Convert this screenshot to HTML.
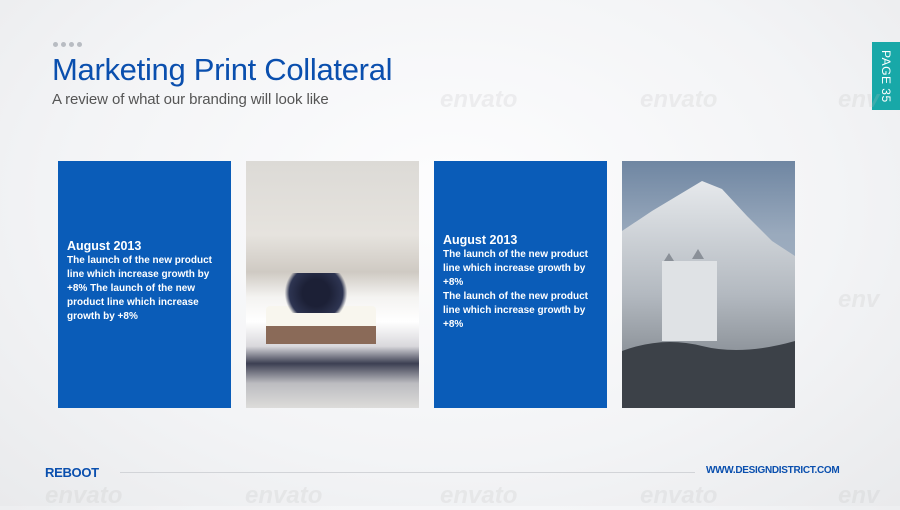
<!DOCTYPE html>
<html><head><meta charset="utf-8"><style>
*{margin:0;padding:0;box-sizing:border-box}
body{width:900px;height:506px;overflow:hidden;position:relative;font-family:"Liberation Sans",sans-serif;background:radial-gradient(ellipse at 50% 40%,#fdfdfe 0%,#f3f4f6 60%,#e9eaec 100%)}
.dots{position:absolute;left:53px;top:42px;display:flex;gap:3px}
.dots i{width:5px;height:5px;border-radius:50%;background:#b8bcc2;display:block}
h1{position:absolute;left:52px;top:52px;font-size:31px;font-weight:normal;color:#0a4fae;letter-spacing:-0.3px}
.sub{position:absolute;left:52px;top:91px;font-size:15px;color:#555;letter-spacing:-0.1px}
.tab{position:absolute;left:872px;top:42px;width:28px;height:68px;background:#18a8a8;color:#fff;font-size:12px;writing-mode:vertical-rl;display:flex;align-items:center;justify-content:center;letter-spacing:0.5px}
.card{position:absolute;top:161px;width:173px;height:247px;overflow:hidden}
.blue{background:#0a5cb8;color:#fff;padding:0 9px;font-weight:bold;font-size:10px;line-height:14px}
.blue b{font-size:12.5px;display:block;line-height:16px}
.wm{position:absolute;font-size:24px;font-style:italic;font-weight:bold;color:rgba(190,190,190,.22)}
.foot-l{position:absolute;left:45px;top:465px;font-size:13px;font-weight:bold;color:#0a4fae;letter-spacing:-0.3px}
.foot-r{position:absolute;left:706px;top:465px;font-size:10px;font-weight:bold;color:#0a4fae;letter-spacing:-0.3px}
.line{position:absolute;left:120px;top:472px;width:575px;height:1px;background:#d2d4d8}
</style></head><body>
<div class="dots"><i></i><i></i><i></i><i></i></div>
<h1>Marketing Print Collateral</h1>
<div class="sub">A review of what our branding will look like</div>
<div class="tab">PAGE 35</div>
<div class="wm" style="left:440px;top:86px">envato</div>
<div class="wm" style="left:640px;top:86px">envato</div>
<div class="wm" style="left:838px;top:86px">env</div>
<div class="wm" style="left:838px;top:286px">env</div>
<div class="wm" style="left:45px;top:482px">envato</div>
<div class="wm" style="left:245px;top:482px">envato</div>
<div class="wm" style="left:440px;top:482px">envato</div>
<div class="wm" style="left:640px;top:482px">envato</div>
<div class="wm" style="left:838px;top:482px">env</div>
<div class="card blue" style="left:58px;padding-top:77px"><b>August 2013</b>The launch of the new product line which increase growth by +8% The launch of the new product line which increase growth by +8%</div>
<div class="card" style="left:246px;background:linear-gradient(180deg,#dcdad6 0%,#e6e3de 30%,#cfcac3 45%,#f4f3f1 55%,#ffffff 65%,#d9d8dc 75%,#3c3f52 82%,#bcbcc0 90%,#dddcda 100%)">
<div style="position:absolute;left:20px;top:145px;width:110px;height:35px;background:#f8f6ee;border-radius:4px"></div>
<div style="position:absolute;left:20px;top:165px;width:110px;height:18px;background:#8a6a58"></div>
<div style="position:absolute;left:30px;top:112px;width:80px;height:40px;background:radial-gradient(circle,#1c2036 30%,#2e3552 60%,transparent 70%)"></div>
</div>
<div class="card blue" style="left:434px;padding-top:71px"><b>August 2013</b>The launch of the new product line which increase growth by +8%<br>The launch of the new product line which increase growth by +8%</div>
<div class="card" style="left:622px;background:linear-gradient(180deg,#6f86a2 0%,#9aaabd 30%,#b0bac6 100%)">
<svg width="173" height="247" style="position:absolute;left:0;top:0">
<defs><linearGradient id="m" x1="0" y1="0" x2="0" y2="1"><stop offset="0" stop-color="#e6e9ec"/><stop offset=".5" stop-color="#b3b9c0"/><stop offset="1" stop-color="#6b7178"/></linearGradient></defs>
<path d="M0 70 L30 50 L55 35 L80 20 L100 28 L125 55 L150 80 L173 95 L173 247 L0 247Z" fill="url(#m)"/>
<path d="M40 100 h55 v80 h-55z" fill="#dfe2e5"/>
<path d="M42 100 l5 -8 l5 8z M70 98 l6 -10 l6 10z" fill="#8a9098"/>
<path d="M0 190 Q40 175 80 185 T173 180 V247 H0Z" fill="#3c4148"/>
</svg>
</div>
<div class="foot-l">REBOOT</div>
<div class="line"></div>
<div class="foot-r">WWW.DESIGNDISTRICT.COM</div>
</body></html>
